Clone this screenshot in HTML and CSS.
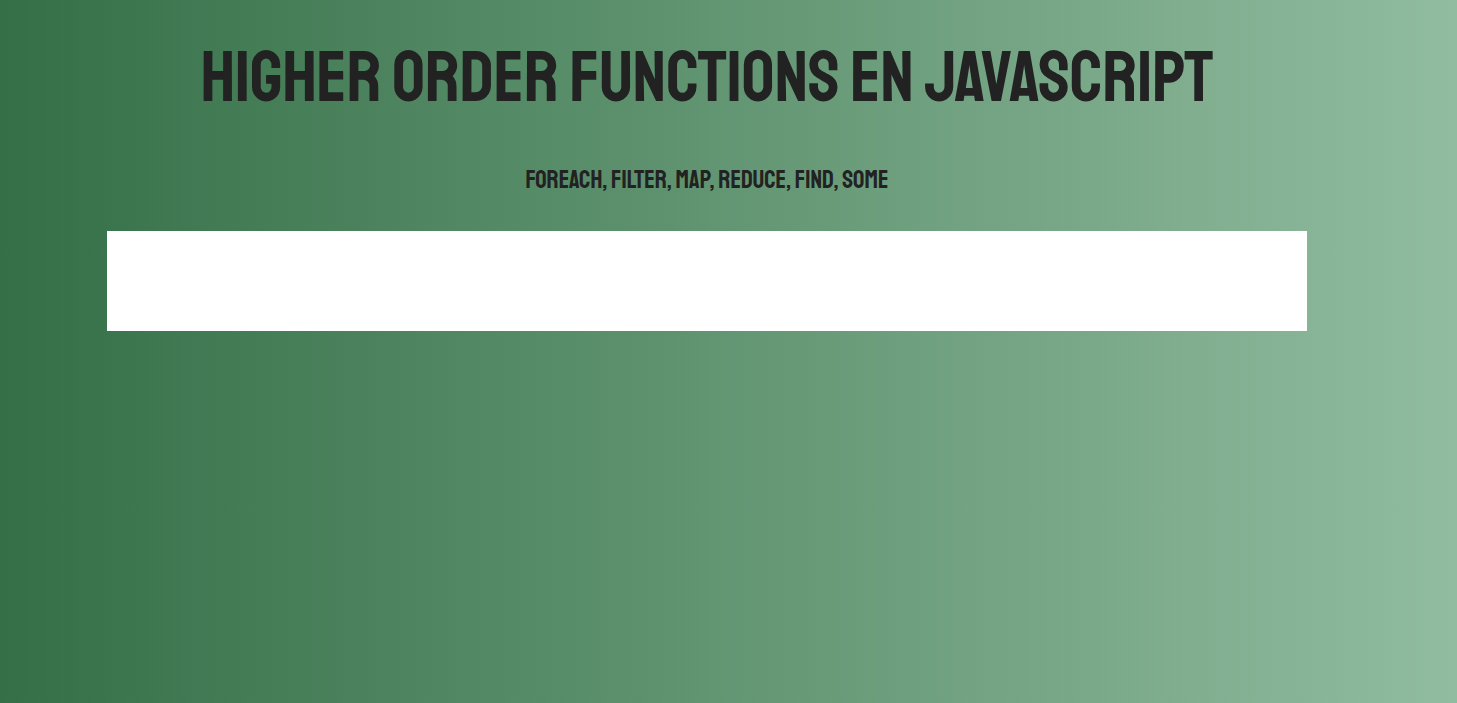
FILE: index.html
```html
<!DOCTYPE html>
<html lang="es">
<head>
<meta charset="utf-8">
<title>Higher Order Functions en JavaScript</title>
<link rel="stylesheet" href="styles.css">
</head>
<body>
<main class="container">
<h1 class="title">Higher order functions en JavaScript</h1>
<h2 class="subtitle">forEach, filter, map, reduce, find, some</h2>
<section class="panel"></section>
</main>
</body>
</html>
```

FILE: styles.css
```css
* {
  box-sizing: border-box;
}

body {
  margin: 0;
  min-height: 100vh;
  background: linear-gradient(to right, #346f47, #91bc9f);
  color: #222;
  font-family: "Staatliches", "Bebas Neue", sans-serif;
  text-transform: uppercase;
}

.container {
  display: flex;
  flex-direction: column;
  align-items: center;
  width: 100%;
  padding: 32px 150px 32px 107px;
}

.title {
  margin: 0;
  font-size: 72px;
  font-weight: 400;
  line-height: 92px;
  text-align: center;
}

.subtitle {
  margin: 40px 0 35px;
  font-size: 25px;
  font-weight: 400;
  line-height: 32px;
  text-align: center;
}

.panel {
  width: 100%;
  min-height: 100px;
  background: #fff;
}
```
